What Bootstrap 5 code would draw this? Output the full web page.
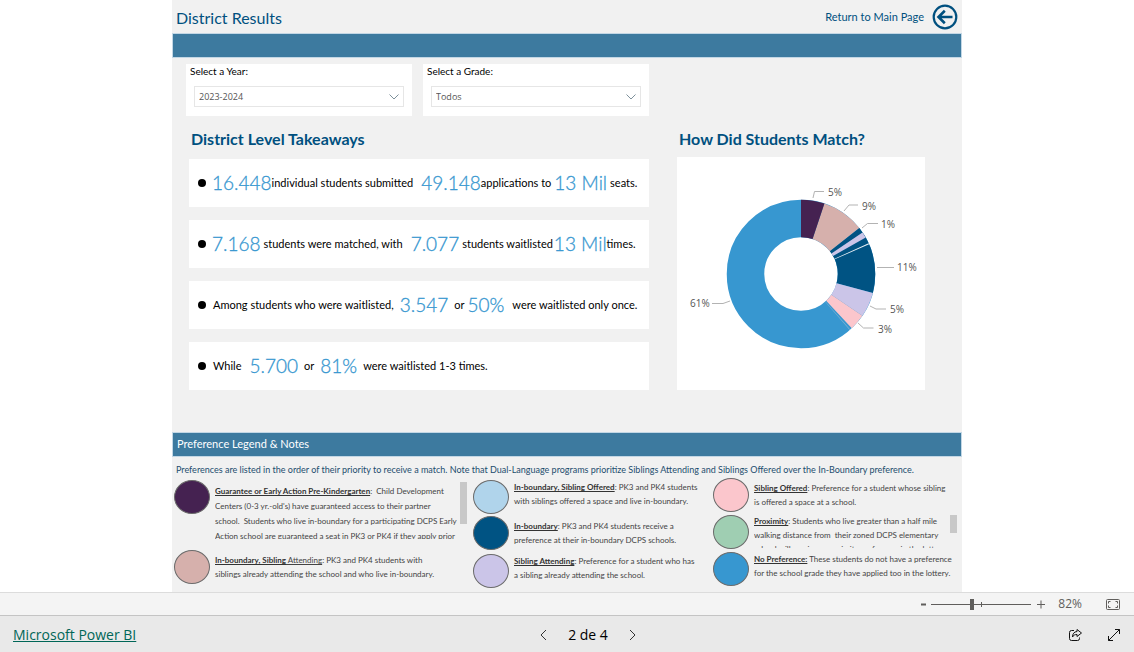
<!DOCTYPE html>
<html lang="en">
<head>
<meta charset="utf-8">
<meta name="viewport" content="width=device-width, initial-scale=1">
<title>District Results</title>
<link href="https://cdn.jsdelivr.net/npm/bootstrap@5.3.0/dist/css/bootstrap.min.css" rel="stylesheet">
<style>
  body { font-family: Lato, "Open Sans", sans-serif; font-size: 11px; line-height: 14px; color: #000; }
  .report { max-width: 790px; background: #f1f1f1; }
  .navy { color: #00507f; }
  .report-head { height: 33px; padding: 0 4px; }
  .report-title { font-size: 16px; line-height: 20px; padding-top: 2px; }
  .band { height: 25px; background: #3d7a9f; border: 1px solid #c3d7e5; padding: 0 4px; }
  .filters { padding: 6px 0 0 14px; gap: 11px; }
  .filter-box { flex: 0 1 226px; height: 52px; padding: 0 8px; }
  .filter-box label { font-size: 10px; margin-left: -4px; }
  .filter-box .form-select {
    height: 21px; margin-top: 8px; padding: 0 20px 0 4px; border: 1px solid #e6e6e6; border-radius: 0;
    font: 9px/18px "Open Sans", sans-serif; color: #555;
    background: #fff url("data:image/svg+xml,%3Csvg xmlns='http://www.w3.org/2000/svg' viewBox='0 0 10 6'%3E%3Cpath d='M.5.5 5 5 9.5.5' fill='none' stroke='%237d909b'/%3E%3C/svg%3E") no-repeat right 4px center / 10px 6px;
  }
  .overview { padding: 13px 37px 0 17px; gap: 28px; }
  .takeaways { flex: 460 1 0; }
  .matches { flex: 248 1 0; }
  .section-title { font-size: 16px; line-height: 20px; font-weight: 700; margin: 0 0 0 2px; }
  .fact-list { gap: 13px; margin-top: 10px; }
  .fact { height: 48px; padding: 0 9px; white-space: pre; }
  .fact::before { content: ""; width: 8px; height: 8px; border-radius: 50%; background: #000; margin-right: 6px; flex: none; }
  .figure-num { font-size: 19px; line-height: 24px; font-weight: 300; color: #3797d0; -webkit-text-stroke: 0.3px #3797d0; }
  .g1 { margin-left: 1px; } .g3 { margin-left: 3px; } .g6 { margin-left: 6px; } .g8 { margin-left: 8px; }
  .chart-box { margin-top: 8px; }
  .chart-box text { font: 10px "Open Sans", sans-serif; fill: #555; }
  .legend-band { margin-top: 42px; color: #fff; font-size: 11px; line-height: 14px; padding-bottom: 2px; }
  .note { font-size: 9px; padding: 6px 4px 0; color: #1d4d6e; }
  .legend-grid { display: grid; grid-template-columns: 299fr 240fr 251fr; font-size: 8px; color: #444; padding: 1px 0 4px; }
  .legend-grid > div { padding: 2px 0 0 2px; white-space: nowrap; }
  .legend-grid > div:last-child { padding-top: 0; }
  .dot { width: 36px; height: 34px; border: 1px solid #6b6b6b; border-radius: 50%; flex: none; margin-right: 5px; }
  .dot-guarantee { background: #452251; } .dot-ib-attending { background: #d6b0ac; } .dot-ib-offered { background: #b0d4eb; }
  .dot-inboundary { background: #005383; } .dot-attending { background: #cbc5e8; } .dot-offered { background: #fbc6cc; }
  .dot-proximity { background: #9fceb2; } .dot-none { background: #3797d0; }
  .term { font-weight: 700; text-decoration: underline; color: #333; }
  .clip { overflow: hidden; }
  .clip-tall { height: 55px; line-height: 15px; margin-top: 4px; }
  .clip-short { height: 34px; margin-top: -1px; }
  .thumb { width: 7px; background: #c8c8c8; flex: none; margin-left: auto; }
  .thumb-tall { height: 42px; margin: 2px 4px 0 auto; }
  .thumb-short { height: 18px; margin-right: 5px; }
  .gap-top-11 { margin-top: 11px; } .gap-top-2 { margin-top: 2px; } .gap-top-3 { margin-top: 3px; }
  .zoombar { height: 24px; background: #f4f4f4; border-top: 1px solid #dcdcdc; border-bottom: 1px solid #c4c4c4; font: 12px/22px "Open Sans", sans-serif; color: #605e5c; padding-right: 14px; }
  .zoom-value { margin: 0 24px 0 13px; }
  .plain { border: 0; background: none; padding: 0; color: inherit; line-height: 1; display: flex; }
  .zoomrange { appearance: none; width: 100px; height: 12px; margin: 0 6px 0 5px;
    background: linear-gradient(#605e5c,#605e5c) 50px 50% / 1px 5px no-repeat, linear-gradient(#605e5c,#605e5c) 0 50% / 100% 1px no-repeat; }
  .zoomrange::-webkit-slider-thumb { appearance: none; width: 4px; height: 11px; background: #605e5c; border-radius: 0; }
  .zoomrange::-moz-range-thumb { width: 4px; height: 11px; background: #605e5c; border: 0; border-radius: 0; }
  .statusbar { height: 36px; background: #e9e9e9; font: 14px/20px "Open Sans", sans-serif; padding: 2px 13px 0; display: grid; grid-template-columns: 1fr auto 1fr; }
  .statusbar a { color: #006657; }
  .pager { gap: 21px; font-weight: 500; color: #000; margin-left: 42px; }
</style>
</head>
<body class="d-flex flex-column min-vh-100">
<main class="report w-100 mx-auto flex-grow-1">
  <header class="report-head d-flex justify-content-between align-items-center">
    <h1 class="report-title navy fw-normal m-0">District Results</h1>
    <a href="#" class="navy text-decoration-none d-flex align-items-center gap-2">Return to Main Page
      <svg width="26" height="26" viewBox="0 0 26 26" fill="none" stroke="#00507f" aria-hidden="true"><circle cx="13" cy="13" r="11.3" stroke-width="2.2"/><path d="M20.5 13H7M12.8 6.800 6.500 13l6.300 6.200" stroke-width="2.600"/></svg>
    </a>
  </header>
  <div class="band"></div>

  <form class="filters d-flex">
    <div class="filter-box bg-white"><label class="d-block" for="year">Select a Year:</label>
      <select id="year" class="form-select"><option>2023-2024</option></select></div>
    <div class="filter-box bg-white"><label class="d-block" for="grade">Select a Grade:</label>
      <select id="grade" class="form-select"><option>Todos</option></select></div>
  </form>

  <div class="overview d-flex">
    <section class="takeaways">
      <h2 class="section-title navy">District Level Takeaways</h2>
      <div class="fact-list d-flex flex-column">
        <div class="fact bg-white d-flex align-items-center"><span class="figure-num">16.448</span><span>individual students submitted</span><span class="figure-num g8">49.148</span><span>applications to</span><span class="figure-num g3">13 Mil</span><span class="g3">seats.</span></div>
        <div class="fact bg-white d-flex align-items-center"><span class="figure-num">7.168</span><span class="g3">students were matched, with</span><span class="figure-num g8">7.077</span><span class="g3">students waitlisted</span><span class="figure-num g1">13 Mil</span><span>times.</span></div>
        <div class="fact bg-white d-flex align-items-center"><span class="g1">Among students who were waitlisted,</span><span class="figure-num g6">3.547</span><span class="g6">or</span><span class="figure-num g3">50%</span><span class="g8">were waitlisted only once.</span></div>
        <div class="fact bg-white d-flex align-items-center"><span class="g1">While</span><span class="figure-num g8">5.700</span><span class="g6">or</span><span class="figure-num g6">81%</span><span class="g6">were waitlisted 1-3 times.</span></div>
      </div>
    </section>
    <section class="matches">
      <h2 class="section-title navy">How Did Students Match?</h2>
      <div class="chart-box bg-white">
        <svg class="d-block w-100" viewBox="0 0 248 233" role="img" aria-label="Share of matches by preference">
          <g fill="none" stroke-width="37.500" transform="rotate(-90 124 117)">
            <circle cx="124" cy="117" r="55.500" pathLength="360" stroke="#3797d0"/>
            <circle cx="124" cy="117" r="55.500" pathLength="360" stroke="#d6b0ac" stroke-dasharray="33.400 326.600" stroke-dashoffset="-18.400"/>
            <circle cx="124" cy="117" r="55.500" pathLength="360" stroke="#005383" stroke-dasharray="53 307" stroke-dashoffset="-51.800"/>
            <circle cx="124" cy="117" r="55.500" pathLength="360" stroke="#cbc5e8" stroke-dasharray="4.700 355.300" stroke-dashoffset="-55.900"/>
            <circle cx="124" cy="117" r="55.500" pathLength="360" stroke="#e9f1f7" stroke-dasharray="0.900 359.100" stroke-dashoffset="-65.500"/>
            <circle cx="124" cy="117" r="55.500" pathLength="360" stroke="#cbc5e8" stroke-dasharray="19.500 340.500" stroke-dashoffset="-104.800"/>
            <circle cx="124" cy="117" r="55.500" pathLength="360" stroke="#fbc6cc" stroke-dasharray="12.500 347.500" stroke-dashoffset="-124.300"/>
            <circle cx="124" cy="117" r="55.500" pathLength="360" stroke="#83b4d4" stroke-dasharray="0.500 359.500" stroke-dashoffset="-138.500"/>
          </g>
          <path d="M124 42.750A74.250 74.250 0 0 1 147.440 46.550L135.600 82.120A36.750 36.750 0 0 0 124 80.250z" fill="#452251"/>
          <g fill="none" stroke="#b3b3b3"><path d="M136 41l1.500-6.500h9.500M167 54l5-6h9M185 71l5.500-4.500h10.500M200 110.500h17M193 149l6 3h10M181 166l5.500 5h10M53 144l-7 2.500H35"/></g>
          <text x="151" y="39">5%</text><text x="185" y="53">9%</text><text x="204" y="71">1%</text><text x="220" y="114">11%</text><text x="213" y="156">5%</text><text x="201" y="176">3%</text><text x="13" y="150">61%</text>
        </svg>
      </div>
    </section>
  </div>

  <h2 class="band legend-band fw-normal mb-0 d-flex align-items-center">Preference Legend &amp; Notes</h2>
  <p class="note m-0">Preferences are listed in the order of their priority to receive a match. Note that Dual-Language programs prioritize Siblings Attending and Siblings Offered over the In-Boundary preference.</p>

  <div class="legend-grid">
    <div>
      <div class="d-flex align-items-start"><span class="dot dot-guarantee"></span>
        <div class="clip clip-tall"><span class="term">Guarantee or Early Action Pre-Kindergarten</span>:&nbsp; Child Development<br>Centers (0-3 yr.-old's) have guaranteed access to their partner<br>school.&nbsp; Students who live in-boundary for a participating DCPS Early<br>Action school are guaranteed a seat in PK3 or PK4 if they apply prior</div>
        <span class="thumb thumb-tall"></span></div>
      <div class="d-flex align-items-center gap-top-11"><span class="dot dot-ib-attending"></span>
        <div><span class="term">In-boundary, Sibling</span><u> Attending</u>: PK3 and PK4 students with<br>siblings already attending the school and who live in-boundary.</div></div>
    </div>
    <div>
      <div class="d-flex align-items-start"><span class="dot dot-ib-offered"></span>
        <div><span class="term">In-boundary, Sibling Offered</span>: PK3 and PK4 students<br>with siblings offered a space and live in-boundary.</div></div>
      <div class="d-flex align-items-center gap-top-2"><span class="dot dot-inboundary"></span>
        <div><span class="term">In-boundary</span>: PK3 and PK4 students receive a<br>preference at their in-boundary DCPS schools.</div></div>
      <div class="d-flex align-items-start mt-1"><span class="dot dot-attending"></span>
        <div><span class="term">Sibling Attending</span>: Preference for a student who has<br>a sibling already attending the school.</div></div>
    </div>
    <div>
      <div class="d-flex align-items-center"><span class="dot dot-offered"></span>
        <div><span class="term">Sibling Offered</span>: Preference for a student whose sibling<br>is offered a space at a school.</div></div>
      <div class="d-flex align-items-start gap-top-3"><span class="dot dot-proximity"></span>
        <div class="clip clip-short"><span class="term">Proximity</span>: Students who live greater than a half mile<br>walking distance from&nbsp; their zoned DCPS elementary<br>school will receive a proximity preference in the lottery</div>
        <span class="thumb thumb-short"></span></div>
      <div class="d-flex align-items-start gap-top-3"><span class="dot dot-none"></span>
        <div><span class="term">No Preference:</span> These students do not have a preference<br>for the school grade they have applied too in the lottery.</div></div>
    </div>
  </div>
</main>

<div class="zoombar d-flex align-items-center justify-content-end">
  <button class="plain" aria-label="Zoom out"><svg width="5" height="12" viewBox="0 0 5 12"><path d="M0 6.500h5" stroke="#605e5c" stroke-width="2"/></svg></button>
  <input class="zoomrange" type="range" min="0" max="100" value="40" aria-label="Zoom">
  <button class="plain" aria-label="Zoom in"><svg width="8" height="12" viewBox="0 0 8 12"><path d="M0 6.500h8M4 2.500v8" stroke="#605e5c"/></svg></button>
  <span class="zoom-value">82%</span>
  <button class="plain" aria-label="Fit to page"><svg width="14" height="11" viewBox="0 0 14 11" fill="none" stroke="#605e5c"><rect x=".5" y=".5" width="13" height="10" rx="1"/><path d="M4.500 2.500h-2v2M4.500 8.500h-2v-2M9.500 2.500h2v2M9.500 8.500h2v-2"/></svg></button>
</div>
<footer class="statusbar align-items-center">
  <a href="#">Microsoft Power BI</a>
  <nav class="pager d-flex align-items-center" aria-label="Pages">
    <button class="plain" aria-label="Previous page"><svg width="7" height="12" viewBox="0 0 7 12"><path d="M6 1 1 6l5 5" fill="none" stroke="#333"/></svg></button>
    <span>2 de 4</span>
    <button class="plain" aria-label="Next page"><svg width="7" height="12" viewBox="0 0 7 12"><path d="m1 1 5 5-5 5" fill="none" stroke="#333"/></svg></button>
  </nav>
  <div class="d-flex justify-content-end align-items-center">
    <button class="plain me-4" aria-label="Share"><svg width="15" height="14" viewBox="0 0 15 14" fill="none" stroke="#111" stroke-linejoin="round"><path d="M6 2.500H3.500a2 2 0 0 0-2 2v6a2 2 0 0 0 2 2h6a2 2 0 0 0 2-2V9.500"/><path d="M9 1.500 13.500 5 9 8.500v-2C7 6.500 5.500 7 4.500 9 4.500 6 6 3.700 9 3.500z"/></svg></button>
    <button class="plain" aria-label="Full screen"><svg width="14" height="14" viewBox="0 0 14 14" fill="none" stroke="#111"><path d="M1.500 12.500l11-11M8 1.500h4.500V6M1.500 8v4.500H6"/></svg></button>
  </div>
</footer>
<script src="https://cdn.jsdelivr.net/npm/bootstrap@5.3.0/dist/js/bootstrap.bundle.min.js"></script>
</body>
</html>
